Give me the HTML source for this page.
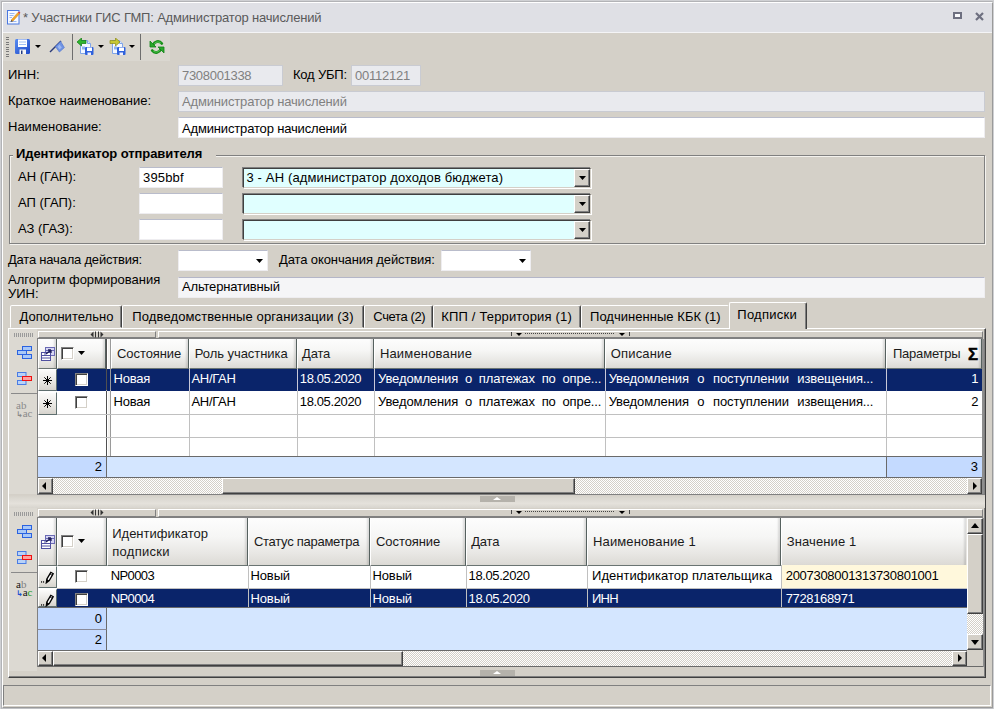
<!DOCTYPE html>
<html lang="ru"><head><meta charset="utf-8"><title>Участники ГИС ГМП</title>
<style>
*{box-sizing:border-box;margin:0;padding:0}
html,body{width:994px;height:709px;overflow:hidden;background:#cfd0d3}
body{font-family:"Liberation Sans",sans-serif;font-size:13px;color:#000;position:relative}
.a{position:absolute;white-space:nowrap}
#win{left:2px;top:2px;width:991px;height:706px;background:#d4d0c8;border:1px solid #fff;border-right-color:#9a9a9a;border-bottom-color:#9a9a9a}
#title{left:3px;top:3px;width:989px;height:30px;background:#dfe0e5;border-bottom:1px solid #f4f4f6}
#title .t{left:20px;top:7px;font-size:13px;letter-spacing:-.18px;line-height:16px;color:#5a5a5a}
#tb{left:3px;top:33px;width:167px;height:28px;background:#dad7d0}
.lbl{font-size:13px;line-height:15px}
.inp{background:#fff;height:21px;font-size:13px;line-height:19px;padding-left:3px;border:1px solid #eeedf0;border-top-color:#b9bccb}
.dis{background:#e9eaee;color:#808080;border:1px solid #c9cbd2}
.sunk{border:1px solid;border-color:#404040 #d4d0c8 #d4d0c8 #404040;box-shadow:-1px -1px 0 #808080,1px 1px 0 #fff;background:#e0ffff;height:20px;line-height:17px;padding-left:4px}
.cbtn{right:0;top:0;width:16px;height:18px;background:#d4d0c8;border:1px solid;border-color:#fff #404040 #404040 #fff;box-shadow:inset -1px -1px 0 #808080}
.arr{width:0;height:0;border:4px solid transparent;border-top-color:#000;border-bottom:0}
.ar7{width:7px;height:4px;background:#000;clip-path:polygon(0 0,100% 0,50% 100%)}
.tab{top:305px;height:23px;border:1px solid;border-color:#fff #404040 transparent #fff;box-shadow:inset -1px 0 0 #808080;font-size:13px;line-height:20px;background:#d4d0c8;border-radius:2px 2px 0 0}
.hdr{background:linear-gradient(#fdfdfd 0%,#f6f6f5 40%,#e8e7e4 75%,#dcdad5 100%);border-right:1px solid #56615f;border-left:1px solid #fff;border-bottom:1px solid #6a7472;font-size:13px;padding-left:5px;box-shadow:inset -3px 0 2px -1px rgba(0,0,0,.12);color:#1a1a1a}
.cell{font-size:13px;line-height:22px;padding-left:3px;overflow:hidden}
.sel{background:#0a246a;color:#fff}
.vl{width:1px;background:#c0c0c0}
.hl{height:1px;background:#c0c0c0}
.foot{background:#d4e6ff}
.fc{background:#c4daff;text-align:right;padding-right:4px;font-size:13px}
.chk{width:13px;height:13px;background:#fff;border:1px solid;border-color:#808080 #fff #fff #808080;box-shadow:inset 1px 1px 0 #404040,inset -1px -1px 0 #d4d0c8}
.sbtn{background:#d4d0c8;border:1px solid;border-color:#fff #404040 #404040 #fff;box-shadow:inset -1px -1px 0 #808080}
.track{background:repeating-conic-gradient(#fff 0 25%,#d4d0c8 0 50%) 0 0/2px 2px}
.ind{background:linear-gradient(#fbfbfa,#e4e2dd 70%,#d6d3cd);border:1px solid;border-color:#fff #5f6f6f #5f6f6f #fff}
</style></head><body>
<div class="a" style="left:1px;top:1px;width:992px;height:708px;border:1px solid #b2b3b6;border-right-color:#c0c1c4;border-bottom-color:#c0c1c4"></div>
<div id="win" class="a"></div>
<div id="title" class="a"><span class="a t">* Участники ГИС ГМП: Администратор начислений</span></div>
<svg class="a" style="left:7px;top:10px" width="14" height="15" viewBox="0 0 14 15"><rect x="0.500" y="0.500" width="11.500" height="13.500" fill="#f6f9ff" stroke="#4a78e0"/><path d="M2.500 3.500h5M2.500 5.500h4M2.500 7.500h2.500M2.500 11.500h7" stroke="#9bb8f0" stroke-width="1"/><path d="M4.300 9.900L11 2.400l1.500 1.400L5.800 11.200z" fill="#f5a623" stroke="#c47a12" stroke-width=".5"/><path d="M11 2.400l.9-1 1.500 1.400-.9 1z" fill="#e23a3a"/><path d="M4.300 9.900L3.700 11.800 5.800 11.200z" fill="#3a2a1a"/></svg>
<div class="a" style="left:953px;top:12px;width:9px;height:7px;border:2px solid #6e7080;border-width:2px 2px 2px 2px;background:#fafafc"></div>
<svg class="a" style="left:975px;top:12px" width="9" height="9" viewBox="0 0 9 9"><path d="M1 1l7 7M8 1l-7 7" stroke="#6e7080" stroke-width="2.200"/></svg>
<div id="tb" class="a"></div>
<div class="a" style="left:6px;top:37px;width:3px;height:20px;background:repeating-linear-gradient(180deg,#7a7a7a 0 1px,transparent 1px 2.400px)"></div>
<svg class="a" style="left:15px;top:39px" width="15" height="15" viewBox="0 0 15 15"><defs><linearGradient id="fg" x1="0" y1="0" x2="1" y2="1"><stop offset="0" stop-color="#5a8df0"/><stop offset="1" stop-color="#1c48c8"/></linearGradient></defs><rect x="0" y="0" width="15" height="15" rx="1.500" fill="url(#fg)"/><rect x="3" y="0.500" width="9" height="7.500" fill="#fff"/><path d="M4 3h7M4 5.500h7" stroke="#9fc0f4" stroke-width="1"/><rect x="4.500" y="10.500" width="6.500" height="4.500" fill="#f4f4f4"/><rect x="6" y="11.500" width="1.500" height="3.500" fill="#223a80"/></svg>
<div class="a arr" style="left:35px;top:45px;border-width:3px 3px 0"></div>
<svg class="a" style="left:49px;top:40px" width="17" height="14" viewBox="0 0 17 14"><path d="M1 12L12 1" stroke="#2a3a78" stroke-width="1.400"/><path d="M11.600 1.400L6.400 6.600 10.400 12 15.400 7.600z" fill="#6f93e4" stroke="#4a70cc" stroke-width=".6"/><path d="M10.500 4.500L8.500 6.800 10.500 9.500 12.800 7.400z" fill="#9db8f0"/></svg>
<div class="a" style="left:72px;top:34px;width:1px;height:26px;background:#6e6e6e"></div>
<svg class="a" style="left:77px;top:38px" width="17" height="17" viewBox="0 0 17 17"><path d="M3.500 2.500h7l3 3v10h-10z" fill="#f4f8ff" stroke="#7fa4e8"/><path d="M10.500 2.500v3h3" fill="#dbe8fc" stroke="#7fa4e8"/><rect x="5" y="8.500" width="3" height="3" fill="#8fb2ee"/><rect x="8" y="9" width="8.500" height="8" rx="1" fill="#2f62dc"/><rect x="10" y="9.500" width="5" height="3.500" fill="#fff"/><rect x="10.500" y="14.500" width="3.500" height="2.500" fill="#eef"/><path d="M0 4L4.500 0v2.500h4.500v3h-4.500v2.500z" fill="#2fb52f" stroke="#0f7a0f" stroke-width=".7"/></svg>
<div class="a arr" style="left:98px;top:45px;border-width:3px 3px 0"></div>
<svg class="a" style="left:109px;top:38px" width="17" height="17" viewBox="0 0 17 17"><path d="M3.500 2.500h7l3 3v10h-10z" fill="#f4f8ff" stroke="#7fa4e8"/><path d="M10.500 2.500v3h3" fill="#dbe8fc" stroke="#7fa4e8"/><rect x="5" y="8.500" width="3" height="3" fill="#8fb2ee"/><rect x="8" y="9" width="8.500" height="8" rx="1" fill="#2f62dc"/><rect x="10" y="9.500" width="5" height="3.500" fill="#fff"/><rect x="10.500" y="14.500" width="3.500" height="2.500" fill="#eef"/><path d="M11 4L6.500 0v2.500H1v3h5.500v2.500z" fill="#c8c832" stroke="#8a8a14" stroke-width=".7"/></svg>
<div class="a arr" style="left:129px;top:45px;border-width:3px 3px 0"></div>
<div class="a" style="left:140px;top:34px;width:1px;height:26px;background:#6e6e6e"></div>
<svg class="a" style="left:149px;top:39px" width="16" height="16" viewBox="0 0 16 16"><g fill="none" stroke="#18901a" stroke-width="2.800" stroke-linecap="round"><path d="M4 6C5.500 2.500 10 1 12.800 4.500"/><path d="M12 10C10.500 13.500 6 15 3.200 11.500"/></g><g fill="none" stroke="#58c858" stroke-width="1" stroke-linecap="round"><path d="M5 5C6.500 2.800 9.500 2.200 11.500 3.800"/><path d="M11 11C9.500 13.200 6.500 13.800 4.500 12.200"/></g><path d="M1 2v6h6z" fill="#2aa82a" stroke="#12801a" stroke-width=".8" stroke-linejoin="round"/><path d="M15 14V8H9z" fill="#2aa82a" stroke="#12801a" stroke-width=".8" stroke-linejoin="round"/></svg>
<span class="a lbl" style="left:8px;top:67px;">ИНН:</span>
<div class="a inp dis" style="left:178px;top:65px;width:105px;letter-spacing:-0.301px;">7308001338</div>
<span class="a lbl" style="left:293px;top:67px;letter-spacing:-0.209px;">Код УБП:</span>
<div class="a inp dis" style="left:351px;top:65px;width:70px;letter-spacing:-0.247px;">00112121</div>
<span class="a lbl" style="left:8px;top:93px;">Краткое наименование:</span>
<div class="a inp dis" style="left:178px;top:91px;width:807px;letter-spacing:-0.158px;">Администратор начислений</div>
<span class="a lbl" style="left:8px;top:119px;">Наименование:</span>
<div class="a inp" style="left:178px;top:117px;width:807px;line-height:21px;letter-spacing:-0.158px;">Администратор начислений</div>
<div class="a" style="left:9px;top:155px;width:976px;height:89px;border:1px solid #808080;box-shadow:1px 1px 0 #f4f2ee,inset 1px 1px 0 #f4f2ee"></div>
<span class="a" style="left:13px;top:146px;padding:0 14px 0 3px;background:#d4d0c8;font-weight:bold;font-size:13px;letter-spacing:-.08px;line-height:16px">Идентификатор отправителя</span>
<span class="a lbl" style="left:18px;top:169px;">АН (ГАН):</span>
<span class="a lbl" style="left:18px;top:195px;">АП (ГАП):</span>
<span class="a lbl" style="left:18px;top:221px;">АЗ (ГАЗ):</span>
<div class="a inp" style="left:139px;top:167px;width:84px;height:21px;letter-spacing:0.172px;">395bbf</div>
<div class="a inp" style="left:139px;top:193px;width:84px;height:21px"></div>
<div class="a inp" style="left:139px;top:219px;width:84px;height:21px"></div>
<div class="a sunk" style="left:243px;top:168px;width:348px;padding-left:2.500px;letter-spacing:0.139px;">3 - АН (администратор доходов бюджета)<div class="a cbtn"><div class="a ar7" style="left:4px;top:6px"></div></div></div>
<div class="a sunk" style="left:243px;top:194px;width:348px"><div class="a cbtn"><div class="a ar7" style="left:4px;top:6px"></div></div></div>
<div class="a sunk" style="left:243px;top:220px;width:348px"><div class="a cbtn"><div class="a ar7" style="left:4px;top:6px"></div></div></div>
<span class="a lbl" style="left:8px;top:252px;letter-spacing:-0.205px;">Дата начала действия:</span>
<div class="a inp" style="left:178px;top:250px;width:90px"><div class="a ar7" style="right:4px;top:8px"></div></div>
<span class="a lbl" style="left:279px;top:252px;letter-spacing:-0.11px;">Дата окончания действия:</span>
<div class="a inp" style="left:441px;top:250px;width:90px"><div class="a ar7" style="right:4px;top:8px"></div></div>
<span class="a lbl" style="left:8px;top:273px;line-height:14px;white-space:normal;width:165px">Алгоритм формирования УИН:</span>
<div class="a inp" style="left:178px;top:277px;width:807px;background:#f5f5f7;border-top-color:#b4b6c8;line-height:17px;letter-spacing:-.18px">Альтернативный</div>
<div class="a" style="left:8px;top:328px;width:978px;height:350px;border:1px solid;border-color:#fff #404040 #404040 #fff;box-shadow:inset -1px -1px 0 #808080"></div>
<div class="a tab" style="left:10px;width:112px;"><span class="a" style="left:8.6px;top:1px;letter-spacing:0.017px;">Дополнительно</span></div>
<div class="a tab" style="left:122px;width:242px;"><span class="a" style="left:9.3px;top:1px;letter-spacing:0.116px;">Подведомственные организации (3)</span></div>
<div class="a tab" style="left:364px;width:69px;"><span class="a" style="left:8.3px;top:1px;letter-spacing:-0.373px;">Счета (2)</span></div>
<div class="a tab" style="left:433px;width:148px;"><span class="a" style="left:7.3px;top:1px;letter-spacing:0.164px;">КПП / Территория (1)</span></div>
<div class="a tab" style="left:581px;width:148px;border-right-color:transparent;box-shadow:none;"><span class="a" style="left:8.0px;top:1px;letter-spacing:0.034px;">Подчиненные КБК (1)</span></div>
<div class="a tab" style="left:729px;top:302px;width:78px;height:27px;border-bottom:0"><span class="a" style="left:7.3px;top:2px;letter-spacing:0.259px;">Подписки</span></div>
<div class="a" style="left:9px;top:329px;width:28px;height:165px;background:#dcd9d2"></div>
<div class="a" style="left:14px;top:333px;width:20px;height:4px;background:repeating-linear-gradient(90deg,#9a9a9a 0 1px,transparent 1px 2px)"></div>
<svg class="a" style="left:17px;top:346px" width="15" height="14" viewBox="0 0 15 14"><g fill="#a8c8f8" stroke="#2a62e0"><rect x="5.500" y="0.500" width="9" height="4"/><rect x="0.500" y="4.500" width="9" height="4"/><rect x="5.500" y="8.500" width="9" height="4"/></g></svg>
<svg class="a" style="left:17px;top:372px" width="15" height="14" viewBox="0 0 15 14"><g fill="#b8d2f8" stroke="#4a7ce4"><rect x="0.500" y="0.500" width="8.500" height="4"/><rect x="0.500" y="8.500" width="8.500" height="4"/></g><rect x="5.500" y="4.500" width="9" height="4" fill="#ffa0a0" stroke="#f01010"/></svg>
<div class="a" style="left:11px;top:393px;width:26px;height:1px;background:#8a8a8a"></div>
<div class="a" style="left:16px;top:401px;font-family:'Liberation Serif',serif;font-size:11px;line-height:8px;color:#8a8a8a">a<span style="color:#8a8a8a">b</span><br><span style="color:#8a8a8a;font-family:'DejaVu Sans',sans-serif;font-size:8px;font-weight:bold">↳</span>a<span style="color:#8a8a8a">c</span></div>
<div class="a" style="left:9px;top:508px;width:28px;height:163px;background:#dcd9d2"></div>
<div class="a" style="left:14px;top:512px;width:20px;height:4px;background:repeating-linear-gradient(90deg,#9a9a9a 0 1px,transparent 1px 2px)"></div>
<svg class="a" style="left:17px;top:525px" width="15" height="14" viewBox="0 0 15 14"><g fill="#a8c8f8" stroke="#2a62e0"><rect x="5.500" y="0.500" width="9" height="4"/><rect x="0.500" y="4.500" width="9" height="4"/><rect x="5.500" y="8.500" width="9" height="4"/></g></svg>
<svg class="a" style="left:17px;top:551px" width="15" height="14" viewBox="0 0 15 14"><g fill="#b8d2f8" stroke="#4a7ce4"><rect x="0.500" y="0.500" width="8.500" height="4"/><rect x="0.500" y="8.500" width="8.500" height="4"/></g><rect x="5.500" y="4.500" width="9" height="4" fill="#ffa0a0" stroke="#f01010"/></svg>
<div class="a" style="left:11px;top:572px;width:26px;height:1px;background:#8a8a8a"></div>
<div class="a" style="left:16px;top:580px;font-family:'Liberation Serif',serif;font-size:11px;line-height:8px;color:#111">a<span style="color:#808080">b</span><br><span style="color:#1c4fd0;font-family:'DejaVu Sans',sans-serif;font-size:8px;font-weight:bold">↳</span>a<span style="color:#1a9a1a">c</span></div>
<div class="a" style="left:38px;top:331px;width:118px;height:7px;border:1px solid;border-color:#fff #808080 #808080 #fff"></div>
<div class="a" style="left:158px;top:331px;width:825px;height:7px;border:1px solid;border-color:#fff #808080 #808080 #fff"></div>
<svg class="a" style="left:90px;top:331px" width="14" height="7" viewBox="0 0 14 7"><path d="M3.500 0.500v6L0.500 3.500zM10.500 0.500v6l3-3z" fill="#333"/><path d="M5.500 0.500v6M8.500 0.500v6" stroke="#333" stroke-width="1"/></svg>
<div class="a" style="left:525px;top:333px;width:90px;height:1px;background:repeating-linear-gradient(90deg,#444 0 1px,transparent 1px 2px)"></div>
<div class="a" style="left:511px;top:332px;width:1px;height:4px;background:#444"></div>
<div class="a" style="left:629px;top:332px;width:1px;height:4px;background:#444"></div>
<div class="a arr" style="left:516px;top:333px;border-width:3px 3px 0"></div>
<div class="a arr" style="left:619px;top:333px;border-width:3px 3px 0"></div>
<div class="a" style="left:38px;top:509px;width:118px;height:8px;border:1px solid;border-color:#fff #808080 #808080 #fff"></div>
<div class="a" style="left:158px;top:509px;width:825px;height:8px;border:1px solid;border-color:#fff #808080 #808080 #fff"></div>
<svg class="a" style="left:90px;top:509px" width="14" height="7" viewBox="0 0 14 7"><path d="M3.500 0.500v6L0.500 3.500zM10.500 0.500v6l3-3z" fill="#333"/><path d="M5.500 0.500v6M8.500 0.500v6" stroke="#333" stroke-width="1"/></svg>
<div class="a" style="left:525px;top:511px;width:90px;height:1px;background:repeating-linear-gradient(90deg,#444 0 1px,transparent 1px 2px)"></div>
<div class="a" style="left:511px;top:510px;width:1px;height:4px;background:#444"></div>
<div class="a" style="left:629px;top:510px;width:1px;height:4px;background:#444"></div>
<div class="a arr" style="left:516px;top:511px;border-width:3px 3px 0"></div>
<div class="a arr" style="left:619px;top:511px;border-width:3px 3px 0"></div>
<div class="a" style="left:37px;top:338px;width:946px;height:1px;background:#808080"></div>
<div class="a" style="left:38px;top:339px;width:945px;height:118px;background:#fff"></div>
<div class="a hdr" style="left:38px;top:339px;width:19px;height:30px"></div>
<div class="a hdr" style="left:57px;top:339px;width:49px;height:30px"></div>
<div class="a hdr" style="left:111px;top:339px;width:78px;height:30px;line-height:30px;padding-left:5.0px;letter-spacing:-0.075px;">Состояние</div>
<div class="a hdr" style="left:189px;top:339px;width:108px;height:30px;line-height:30px;padding-left:4.7px;letter-spacing:-0.045px;">Роль участника</div>
<div class="a hdr" style="left:297px;top:339px;width:77px;height:30px;line-height:30px;padding-left:4.1px;letter-spacing:-0.199px;">Дата</div>
<div class="a hdr" style="left:374px;top:339px;width:231px;height:30px;line-height:30px;padding-left:4.9px;letter-spacing:0.181px;">Наименование</div>
<div class="a hdr" style="left:605px;top:339px;width:281px;height:30px;line-height:30px;padding-left:4.8px;letter-spacing:0.146px;">Описание</div>
<div class="a hdr" style="left:886px;top:339px;width:96px;height:30px;line-height:30px;padding-left:5.9px;letter-spacing:-0.19px;">Параметры</div>
<svg class="a" style="left:41px;top:347px" width="14" height="14" viewBox="0 0 14 14"><rect x="4.500" y="0.500" width="9" height="8" fill="#d6d6f4" stroke="#6a6ab4"/><path d="M4.500 3.500h9" stroke="#6a6ab4"/><rect x="0.500" y="5.500" width="9" height="8" fill="#fff" stroke="#5050a0"/><path d="M0.500 8.500h9M0.500 11h9M4 5.500v3" stroke="#5050a0"/><path d="M5 7l5-4M10 3h-3M10 3v3" stroke="#20205a" stroke-width="1.300" fill="none"/></svg>
<div class="a" style="left:106px;top:339px;width:5px;height:117px;background:#f4f3f0;border-left:1px solid #505050;border-right:1px solid #9a9a9a;box-shadow:inset 1px 0 0 #fff"></div>
<span class="a" style="left:968px;top:345px;font-size:16px;font-weight:bold;line-height:20px;-webkit-text-stroke:.5px #000;transform:scaleX(1.04);transform-origin:0 0">Σ</span>
<div class="a chk" style="left:61px;top:347px"></div>
<div class="a ar7" style="left:78px;top:351px"></div>
<div class="a vl" style="left:189px;top:368px;height:88px"></div>
<div class="a vl" style="left:297px;top:368px;height:88px"></div>
<div class="a vl" style="left:374px;top:368px;height:88px"></div>
<div class="a vl" style="left:605px;top:368px;height:88px"></div>
<div class="a vl" style="left:886px;top:368px;height:88px"></div>
<div class="a hl" style="left:38px;top:390px;width:944px"></div>
<div class="a hl" style="left:38px;top:414px;width:944px"></div>
<div class="a hl" style="left:38px;top:437px;width:944px"></div>
<div class="a sel" style="left:57px;top:369px;width:49px;height:22px"></div>
<div class="a sel" style="left:107px;top:369px;width:3px;height:22px"></div>
<div class="a sel" style="left:111px;top:369px;width:871px;height:22px"></div>
<div class="a ind" style="left:38px;top:369px;width:19px;height:22px"><svg class="a" style="left:4px;top:6px" width="9" height="9" viewBox="0 0 9 9"><path d="M4.500 0v9M0 4.500h9M1.300 1.300l6.400 6.400M7.700 1.300l-6.400 6.400" stroke="#000" stroke-width="1"/></svg></div>
<div class="a chk" style="left:75px;top:373px"></div>
<span class="a" style="left:113.6px;top:368px;line-height:22px;letter-spacing:-0.211px;color:#fff;">Новая</span>
<span class="a" style="left:191.4px;top:368px;line-height:22px;letter-spacing:-0.284px;color:#fff;">АН/ГАН</span>
<span class="a" style="left:299.8px;top:368px;line-height:22px;letter-spacing:-0.378px;color:#fff;">18.05.2020</span>
<span class="a" style="left:378.0px;top:368px;line-height:22px;letter-spacing:-.1px;word-spacing:3.23px;color:#fff;">Уведомления о платежах по опре...</span>
<span class="a" style="left:608.7px;top:368px;line-height:22px;letter-spacing:-.1px;word-spacing:4.97px;color:#fff;">Уведомления о поступлении извещения...</span>
<span class="a" style="left:940px;top:368px;width:38.5px;text-align:right;line-height:22px;color:#fff;">1</span>
<div class="a" style="left:189px;top:369px;width:1px;height:22px;background:#c8c8d8"></div>
<div class="a" style="left:297px;top:369px;width:1px;height:22px;background:#c8c8d8"></div>
<div class="a" style="left:374px;top:369px;width:1px;height:22px;background:#c8c8d8"></div>
<div class="a" style="left:605px;top:369px;width:1px;height:22px;background:#c8c8d8"></div>
<div class="a" style="left:886px;top:369px;width:1px;height:22px;background:#c8c8d8"></div>
<div class="a ind" style="left:38px;top:392px;width:19px;height:23px"><svg class="a" style="left:4px;top:6px" width="9" height="9" viewBox="0 0 9 9"><path d="M4.500 0v9M0 4.500h9M1.300 1.300l6.400 6.400M7.700 1.300l-6.400 6.400" stroke="#000" stroke-width="1"/></svg></div>
<div class="a chk" style="left:75px;top:396px"></div>
<span class="a" style="left:113.6px;top:391px;line-height:22px;letter-spacing:-0.211px;">Новая</span>
<span class="a" style="left:191.4px;top:391px;line-height:22px;letter-spacing:-0.284px;">АН/ГАН</span>
<span class="a" style="left:299.8px;top:391px;line-height:22px;letter-spacing:-0.378px;">18.05.2020</span>
<span class="a" style="left:378.0px;top:391px;line-height:22px;letter-spacing:-.1px;word-spacing:3.23px;">Уведомления о платежах по опре...</span>
<span class="a" style="left:608.7px;top:391px;line-height:22px;letter-spacing:-.1px;word-spacing:4.97px;">Уведомления о поступлении извещения...</span>
<span class="a" style="left:940px;top:391px;width:38.5px;text-align:right;line-height:22px;">2</span>
<div class="a foot" style="left:38px;top:456px;width:944px;height:22px;border-top:1px solid #6a6a6a;border-bottom:1px solid #6a6a6a"></div>
<div class="a fc" style="left:38px;top:457px;width:69px;height:20px;border-right:1px solid #6a6a6a;line-height:20px">2</div>
<div class="a fc" style="left:886px;top:457px;width:96px;height:20px;border-left:1px solid #6a6a6a;line-height:20px">3</div>
<div class="a track" style="left:38px;top:478px;width:944px;height:16px"></div>
<div class="a sbtn" style="left:38px;top:478px;width:15px;height:16px"><div class="a" style="left:3px;top:3px;border:4px solid transparent;border-right-color:#000;border-left:0;width:0;height:0"></div></div>
<div class="a sbtn" style="left:967px;top:478px;width:15px;height:16px"><div class="a" style="left:5px;top:3px;border:4px solid transparent;border-left-color:#000;border-right:0;width:0;height:0"></div></div>
<div class="a sbtn" style="left:222px;top:478px;width:353px;height:16px"></div>
<div class="a" style="left:982px;top:339px;width:2px;height:155px;background:#8e8e8e"></div>
<div class="a" style="left:37px;top:339px;width:1px;height:155px;background:#808080"></div>
<div class="a" style="left:37px;top:494px;width:947px;height:1px;background:#808080"></div>
<div class="a" style="left:9px;top:495px;width:976px;height:13px;background:linear-gradient(#d4d0c8,#dcd9d2 30%,#e4e1db 65%,#d8d5ce)"></div>
<div class="a" style="left:480px;top:496px;width:35px;height:6px;background:#b5b2ab"></div><div class="a" style="left:493px;top:497px;width:0;height:0;border:4px solid transparent;border-bottom:3px solid #fff;border-top:0"></div>
<div class="a" style="left:480px;top:670px;width:35px;height:6px;background:#b5b2ab"></div><div class="a" style="left:493px;top:671px;width:0;height:0;border:4px solid transparent;border-bottom:3px solid #fff;border-top:0"></div>
<div class="a" style="left:37px;top:517px;width:946px;height:1px;background:#808080"></div>
<div class="a" style="left:38px;top:518px;width:929px;height:132px;background:#fff"></div>
<div class="a hdr" style="left:38px;top:518px;width:19px;height:48px"></div>
<div class="a hdr" style="left:57px;top:518px;width:50px;height:48px"></div>
<div class="a hdr" style="left:107px;top:518px;width:141px;height:48px;line-height:18px;padding:7px 0 0 4.2px"><span style="letter-spacing:0.007px;">Идентификатор</span><br><span style="letter-spacing:0.296px;">подписки</span></div>
<div class="a hdr" style="left:248px;top:518px;width:122px;height:48px;line-height:47px;padding-left:4.9px;letter-spacing:-0.268px;">Статус параметра</div>
<div class="a hdr" style="left:370px;top:518px;width:96px;height:48px;line-height:47px;padding-left:5.0px;letter-spacing:-0.075px;">Состояние</div>
<div class="a hdr" style="left:466px;top:518px;width:121px;height:48px;line-height:47px;padding-left:4.2px;letter-spacing:-0.199px;">Дата</div>
<div class="a hdr" style="left:587px;top:518px;width:194px;height:48px;line-height:47px;padding-left:5.0px;letter-spacing:0.131px;">Наименование 1</div>
<div class="a hdr" style="left:781px;top:518px;width:186px;height:48px;line-height:47px;padding-left:4.7px;border-right-color:#e8e6e2;letter-spacing:0.11px;">Значение 1</div>
<svg class="a" style="left:41px;top:535px" width="14" height="14" viewBox="0 0 14 14"><rect x="4.500" y="0.500" width="9" height="8" fill="#d6d6f4" stroke="#6a6ab4"/><path d="M4.500 3.500h9" stroke="#6a6ab4"/><rect x="0.500" y="5.500" width="9" height="8" fill="#fff" stroke="#5050a0"/><path d="M0.500 8.500h9M0.500 11h9M4 5.500v3" stroke="#5050a0"/><path d="M5 7l5-4M10 3h-3M10 3v3" stroke="#20205a" stroke-width="1.300" fill="none"/></svg>
<div class="a chk" style="left:61px;top:535px"></div>
<div class="a ar7" style="left:78px;top:539px"></div>
<div class="a" style="left:781px;top:565px;width:186px;height:23px;background:#fff8dc"></div>
<div class="a ind" style="left:38px;top:566px;width:19px;height:22px"><svg class="a" style="left:2px;top:4px" width="14" height="13" viewBox="0 0 14 13"><rect x="0" y="10.300" width="1.100" height="1.300" fill="#000"/><rect x="2" y="10.300" width="1.100" height="1.300" fill="#000"/><path d="M5.300 11.800L5.850 8.080 9.790 1.300 12.210 2.700 8.270 9.480z" fill="#fff" stroke="#000" stroke-width="1.300"/><path d="M5.300 11.800L5.850 8.080 8.270 9.480z" fill="#000"/><path d="M8.870 2.900L11.290 4.300" stroke="#000" stroke-width=".8"/></svg></div>
<div class="a chk" style="left:75px;top:570px"></div>
<span class="a" style="left:110.8px;top:565px;line-height:22px;letter-spacing:-0.631px;">NP0003</span>
<span class="a" style="left:250.5px;top:565px;line-height:22px;letter-spacing:-0.128px;">Новый</span>
<span class="a" style="left:372.5px;top:565px;line-height:22px;letter-spacing:-0.128px;">Новый</span>
<span class="a" style="left:468.6px;top:565px;line-height:22px;letter-spacing:-0.398px;">18.05.2020</span>
<span class="a" style="left:592.0px;top:565px;line-height:22px;letter-spacing:0.047px;">Идентификатор плательщика</span>
<span class="a" style="left:785.7px;top:565px;line-height:22px;letter-spacing:-0.289px;">2007308001313730801001</span>
<div class="a sel" style="left:57px;top:589px;width:910px;height:18px"></div>
<div class="a ind" style="left:38px;top:589px;width:19px;height:18px"><svg class="a" style="left:2px;top:4px" width="14" height="13" viewBox="0 0 14 13"><rect x="0" y="10.300" width="1.100" height="1.300" fill="#000"/><rect x="2" y="10.300" width="1.100" height="1.300" fill="#000"/><path d="M5.300 11.800L5.850 8.080 9.790 1.300 12.210 2.700 8.270 9.480z" fill="#fff" stroke="#000" stroke-width="1.300"/><path d="M5.300 11.800L5.850 8.080 8.270 9.480z" fill="#000"/><path d="M8.870 2.900L11.290 4.300" stroke="#000" stroke-width=".8"/></svg></div>
<div class="a chk" style="left:75px;top:593px"></div>
<span class="a" style="left:110.8px;top:588px;line-height:22px;letter-spacing:-0.631px;color:#fff;">NP0004</span>
<span class="a" style="left:250.5px;top:588px;line-height:22px;letter-spacing:-0.128px;color:#fff;">Новый</span>
<span class="a" style="left:372.5px;top:588px;line-height:22px;letter-spacing:-0.128px;color:#fff;">Новый</span>
<span class="a" style="left:468.6px;top:588px;line-height:22px;letter-spacing:-0.398px;color:#fff;">18.05.2020</span>
<span class="a" style="left:592.0px;top:588px;line-height:22px;letter-spacing:-0.742px;color:#fff;">ИНН</span>
<span class="a" style="left:785.7px;top:588px;line-height:22px;letter-spacing:-0.361px;color:#fff;">7728168971</span>
<div class="a vl" style="left:248px;top:565px;height:42px"></div>
<div class="a vl" style="left:370px;top:565px;height:42px"></div>
<div class="a vl" style="left:466px;top:565px;height:42px"></div>
<div class="a vl" style="left:587px;top:565px;height:42px"></div>
<div class="a vl" style="left:781px;top:565px;height:42px"></div>
<div class="a hl" style="left:57px;top:588px;width:910px"></div>
<div class="a foot" style="left:38px;top:607px;width:929px;height:44px;border-top:1px solid #6a6a6a;border-bottom:1px solid #6a6a6a"></div>
<div class="a fc" style="left:38px;top:608px;width:69px;height:22px;border-right:1px solid #6a6a6a;border-bottom:1px solid #8a8a98;line-height:21px">0</div>
<div class="a fc" style="left:38px;top:630px;width:69px;height:20px;border-right:1px solid #6a6a6a;line-height:20px">2</div>
<div class="a track" style="left:967px;top:518px;width:16px;height:132px"></div>
<div class="a sbtn" style="left:967px;top:518px;width:16px;height:16px"><div class="a" style="left:3px;top:4px;border:4px solid transparent;border-bottom:5px solid #000;border-top:0;width:0;height:0"></div></div>
<div class="a sbtn" style="left:967px;top:534px;width:16px;height:80px"></div>
<div class="a sbtn" style="left:967px;top:634px;width:16px;height:16px"><div class="a" style="left:3px;top:5px;border:4px solid transparent;border-top:5px solid #000;border-bottom:0;width:0;height:0"></div></div>
<div class="a track" style="left:38px;top:651px;width:929px;height:15px"></div>
<div class="a sbtn" style="left:38px;top:651px;width:15px;height:15px"><div class="a" style="left:3px;top:2px;border:4px solid transparent;border-right-color:#000;border-left:0;width:0;height:0"></div></div>
<div class="a sbtn" style="left:952px;top:651px;width:15px;height:15px"><div class="a" style="left:5px;top:2px;border:4px solid transparent;border-left-color:#000;border-right:0;width:0;height:0"></div></div>
<div class="a sbtn" style="left:53px;top:651px;width:350px;height:15px"></div>
<div class="a" style="left:967px;top:650px;width:16px;height:16px;background:#d4d0c8"></div>
<div class="a" style="left:37px;top:666px;width:947px;height:1px;background:#6a6a6a"></div>
<div class="a" style="left:983px;top:518px;width:1px;height:149px;background:#8e8e8e"></div>
<div class="a" style="left:37px;top:518px;width:1px;height:149px;background:#808080"></div>
<div class="a" style="left:3px;top:685px;width:988px;height:21px;border:1px solid;border-color:#808080 #fff #fff #808080"></div>
</body></html>
